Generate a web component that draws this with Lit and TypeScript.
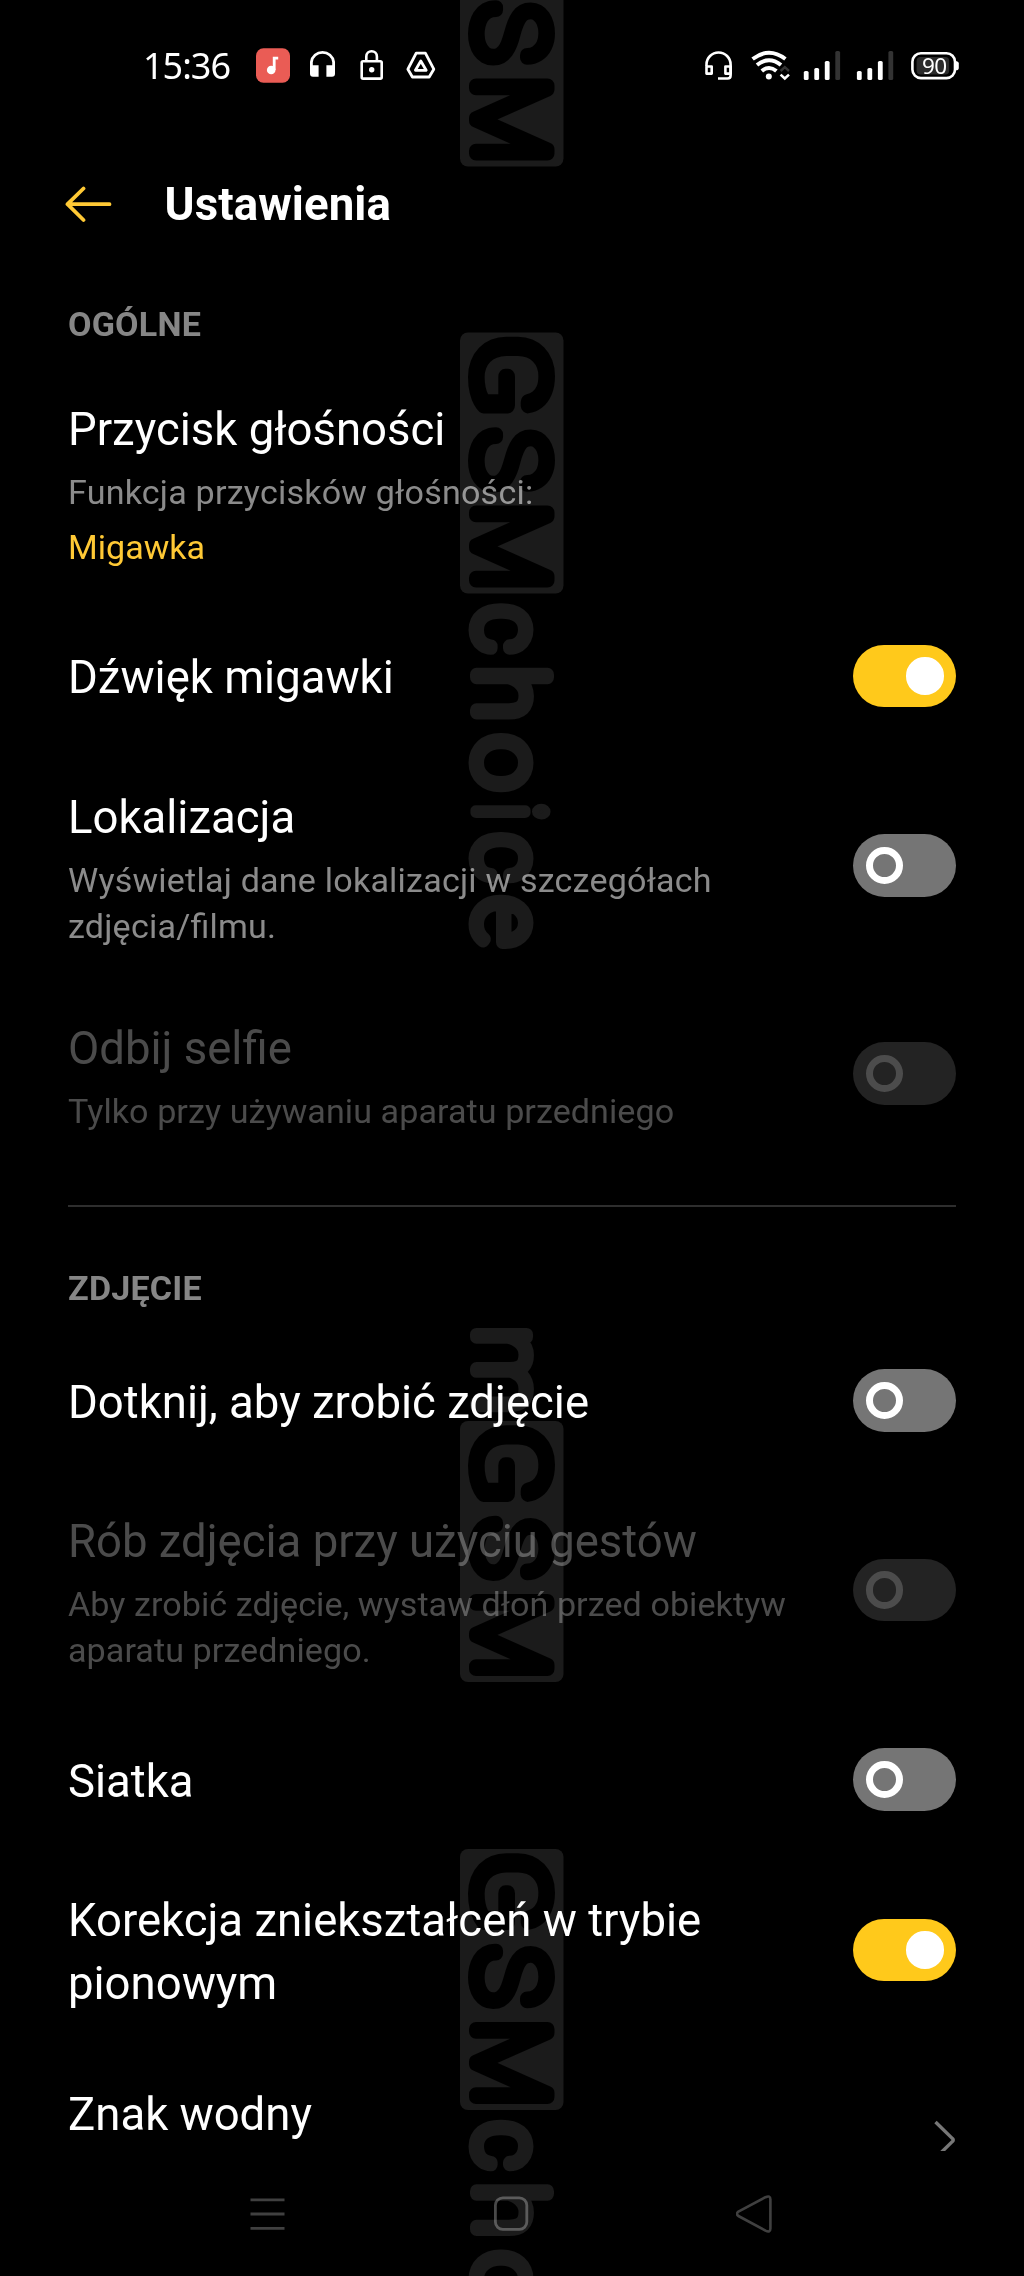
import { LitElement, html, css, svg, nothing } from "lit";
import { customElement, property } from "lit/decorators.js";

type Control = "on" | "off" | "chevron" | "none";

interface Row {
  title: string;
  sub?: string;
  value?: string;
  control: Control;
  disabled?: boolean;
  /** Extra classes that tune the vertical rhythm of the row. */
  spacing?: string;
}

const GENERAL: Row[] = [
  { title: "Przycisk głośności", sub: "Funkcja przycisków głośności:", value: "Migawka", control: "none" },
  { title: "Dźwięk migawki", control: "on", spacing: "after-value" },
  { title: "Lokalizacja", sub: "Wyświetlaj dane lokalizacji w szczegółach zdjęcia/filmu.", control: "off" },
  { title: "Odbij selfie", sub: "Tylko przy używaniu aparatu przedniego", control: "off", disabled: true, spacing: "tight" },
];

const PHOTO: Row[] = [
  { title: "Dotknij, aby zrobić zdjęcie", control: "off" },
  { title: "Rób zdjęcia przy użyciu gestów", sub: "Aby zrobić zdjęcie, wystaw dłoń przed obiektyw aparatu przedniego.", control: "off", disabled: true },
  { title: "Siatka", control: "off" },
  { title: "Korekcja zniekształceń w trybie pionowym", control: "on" },
  { title: "Znak wodny", control: "chevron", spacing: "tight" },
];

@customElement("toggle-switch")
class ToggleSwitch extends LitElement {
  @property({ type: Boolean, reflect: true }) on = false;
  @property({ type: Boolean, reflect: true }) disabled = false;

  static styles = css`
    :host {
      display: flex;
      align-items: center;
      box-sizing: border-box;
      flex: none;
      width: 103px;
      height: 62.6px;
      padding: 0 12.5px;
      border-radius: 32px;
      background: #757575;
    }
    :host([on]) {
      justify-content: flex-end;
      background: #ffc91b;
    }
    :host([disabled]) {
      background: #232323;
    }
    .knob {
      box-sizing: border-box;
      width: 37.5px;
      height: 37.5px;
      border-radius: 50%;
      border: 7.7px solid #fff;
    }
    :host([on]) .knob {
      background: #fff;
    }
    :host([disabled]) .knob {
      border-color: #4c4c4c;
    }
  `;

  render() {
    return html`<div class="knob"></div>`;
  }
}

@customElement("setting-row")
class SettingRow extends LitElement {
  @property({ attribute: false }) row!: Row;

  static styles = css`
    :host {
      display: flex;
      align-items: center;
      justify-content: space-between;
      padding-top: 76.9px;
    }
    :host(.first) {
      padding-top: 0;
    }
    :host(.after-value) {
      padding-top: 77.4px;
    }
    :host(.tight) {
      padding-top: 68.4px;
    }
    .text {
      width: 730px;
      color: #fff;
    }
    .title {
      font-size: 45.5px;
      line-height: 62.6px;
    }
    .sub {
      margin-top: 7.4px;
      font-size: 34.1px;
      line-height: 46.3px;
      letter-spacing: 0.2px;
      font-feature-settings: "liga" 1;
      color: #8b8b8b;
    }
    .value {
      margin-top: 8.4px;
      font-size: 34.1px;
      line-height: 46.3px;
      color: #ffc935;
    }
    .disabled .title,
    .disabled .sub {
      color: #4b4b4b;
    }
    .disabled .sub {
      letter-spacing: 0.07px;
    }
    .link {
      min-height: 112px;
    }
    toggle-switch {
      margin-top: -5px;
    }
    .chevron {
      flex: none;
      width: 24px;
      height: 40px;
    }
  `;

  private control() {
    const { control, disabled } = this.row;
    if (control === "none") return nothing;
    if (control === "chevron") {
      return html`<svg class="chevron" viewBox="0 0 24 40" fill="none" stroke="#777" stroke-width="3.4" stroke-linejoin="round">
        <path d="M3.5 2 L20.5 18.6 Q22 20 20.5 21.4 L3.5 38" />
      </svg>`;
    }
    return html`<toggle-switch ?on=${control === "on"} ?disabled=${!!disabled}></toggle-switch>`;
  }

  render() {
    const { title, sub, value, disabled, control } = this.row;
    return html`
      <div class="text ${disabled ? "disabled" : ""} ${control === "chevron" ? "link" : ""}">
        <div class="title">${title}</div>
        ${sub ? html`<div class="sub">${sub}</div>` : nothing}
        ${value ? html`<div class="value">${value}</div>` : nothing}
      </div>
      ${this.control()}
    `;
  }
}

@customElement("status-bar")
class StatusBar extends LitElement {
  static styles = css`
    :host {
      display: flex;
      box-sizing: border-box;
      height: 130px;
      padding: 48px 62px 0 143px;
      color: #fff;
    }
    svg {
      display: block;
      height: 35px;
      flex: none;
    }
    .time {
      width: 113px;
      font-family: "Noto Sans", sans-serif;
      font-size: 36px;
      line-height: 35px;
      letter-spacing: -1px;
    }
    .spacer {
      flex: 1;
    }
    .level {
      font-family: "Noto Sans", sans-serif;
      font-size: 22.5px;
      letter-spacing: -0.6px;
    }
  `;

  private bars(x: number) {
    const heights = [9, 12, 19, 29];
    return heights.map(
      (h, i) => svg`<rect x=${x + i * 10.5} y=${80 - h} width="4.8" height=${h} rx="1.6" fill=${i === 3 ? "#333" : "#fff"} />`
    );
  }

  render() {
    return html`
      <div class="time">15:36</div>
      <svg width="54" viewBox="256 48 54 35">
        <rect x="256" y="48.3" width="34" height="34.4" rx="7.5" fill="#ea5c55" />
        <circle cx="271.2" cy="70" r="4.3" fill="#fff" />
        <path d="M274.2 70 V58.2 H278.2" fill="none" stroke="#fff" stroke-width="2.8" />
      </svg>
      <svg width="50" viewBox="310 48 50 35">
        <path d="M311.4 72 V62 A11.2 11.2 0 0 1 333.6 62 V72" fill="none" stroke="#fff" stroke-width="2.8" />
        <path d="M310 65.3 H318.6 V76.7 H313 Q310 76.7 310 73.7 Z M335 65.3 H326.4 V76.7 H332 Q335 76.7 335 73.7 Z" fill="#fff" />
      </svg>
      <svg width="46" viewBox="360 48 46 35">
        <rect x="361.7" y="61.2" width="20" height="17.4" rx="1.4" fill="none" stroke="#fff" stroke-width="2.6" />
        <path d="M366.3 61 V56.5 A5.3 5.3 0 0 1 376.9 56.5 V61" fill="none" stroke="#fff" stroke-width="2.6" />
        <circle cx="371.7" cy="69.8" r="2.7" fill="#fff" />
      </svg>
      <svg width="34" viewBox="406 48 34 35">
        <g fill="none" stroke="#fff" stroke-width="2.8" stroke-linejoin="round">
          <path d="M416.2 53.2 H425.4 L433.8 69.2 L429.2 77 H412.4 L407.9 69.2 Z" />
          <path d="M420.8 61 L426.2 70.3 H415.4 Z" />
        </g>
      </svg>
      <div class="spacer"></div>
      <svg width="46" viewBox="705 48 46 35">
        <g fill="none" stroke="#fff" stroke-width="2.6" stroke-linejoin="round">
          <path d="M706.5 66 V64.5 A12 12 0 0 1 730.6 64.5 V75.5 Q730.6 78.5 727.6 78.5 H718" />
          <path d="M706.5 66.5 H711.7 V73.6 H706.5 Z M730.6 66.5 H725.4 V73.6 H730.6 Z" />
        </g>
      </svg>
      <svg width="52" viewBox="751 48 52 35">
        <g fill="none" stroke="#fff" stroke-width="4">
          <path d="M752.6 59 Q769 46.5 785.4 59" />
          <path d="M757 65 Q769 55.5 781 65" />
          <path d="M761.8 71 Q769 65 776.4 71" />
        </g>
        <circle cx="768.8" cy="76.6" r="3" fill="#fff" />
        <path d="M780.6 71 L784.8 67.2 L789 71" fill="none" stroke="#333" stroke-width="2.4" />
        <path d="M780.6 74.6 L784.8 78.4 L789 74.6" fill="none" stroke="#fff" stroke-width="2.6" />
      </svg>
      <svg width="107" viewBox="803 48 107 35">${this.bars(803.8)}${this.bars(856.9)}</svg>
      <svg width="52" viewBox="910 48 52 35">
        <rect x="912.4" y="53.3" width="42.6" height="24.8" rx="8.5" fill="none" stroke="#fff" stroke-width="2.6" />
        <path d="M955 61 Q958.8 61 958.8 63.5 V68 Q958.8 70.5 955 70.5 Z" fill="#fff" />
        <rect x="916.6" y="57" width="32.6" height="17.6" rx="4" fill="#2b2b2b" />
        <text class="level" x="922" y="73.8" fill="#fff">90</text>
      </svg>
    `;
  }
}

/** Letters of the vertical mark: glyph, start and end of its ink along the strip. */
type Letter = [string, number, number];
const BOXED: Letter[] = [
  ["G", 4, 81.7],
  ["S", 94, 160.5],
  ["M", 172, 255.3],
];
const OUTER: Letter[] = [
  ["c", 270, 323],
  ["h", 334.7, 388],
  ["o", 400, 460.6],
  ["i", 470.6, 487.6],
  ["c", 498.8, 551.5],
  ["e", 561.8, 616.5],
];
const LEAD: Letter[] = [["m", -94, -8.7]];

@customElement("side-mark")
class SideMark extends LitElement {
  static styles = css`
    :host {
      position: absolute;
      inset: 0;
      overflow: hidden;
      pointer-events: none;
      mix-blend-mode: screen;
    }
    svg {
      display: block;
    }
    text {
      font: 100 101px Roboto, sans-serif;
      stroke-width: 14px;
      stroke-linejoin: round;
      stroke-linecap: round;
    }
    .dotted {
      font: 100 101px "Noto Sans CJK SC", sans-serif;
      stroke-width: 12px;
    }
    .cut {
      fill: #000;
      stroke: #000;
    }
    .solid {
      fill: #1b1b1b;
      stroke: #1b1b1b;
    }
  `;

  private pen = document.createElement("canvas").getContext("2d")!;

  /** Stretches a glyph so that its stroked outline spans exactly [from, to]. */
  private fit(ch: string, from: number, to: number, scaleY: number) {
    const dotted = ch === "i";
    const stroke = dotted ? 12 : 14;
    this.pen.font = dotted ? `100 101px "Noto Sans CJK SC", sans-serif` : `100 101px Roboto, sans-serif`;
    const m = this.pen.measureText(ch);
    const left = -m.actualBoundingBoxLeft - stroke / 2;
    const right = m.actualBoundingBoxRight + stroke / 2;
    const k = (to - from) / (right - left);
    return `translate(${from - left * k} -16) scale(${k} ${scaleY})`;
  }

  private letters(list: Letter[], cls: string, scaleY: number) {
    return list.map(
      ([ch, from, to]) => svg`<text class="${cls} ${ch === "i" ? "dotted" : ""}" transform=${this.fit(ch, from, to, scaleY)}>${ch}</text>`
    );
  }

  private mark(y: number, tail: boolean, lead: boolean) {
    return svg`<g transform="translate(460 ${y}) rotate(90)">
      <rect x="0" y="-103.5" width="261" height="103.5" rx="8" fill="#1b1b1b" />
      ${this.letters(BOXED, "cut", 1)}
      ${tail ? this.letters(OUTER, "solid", 0.93) : nothing}
      ${lead ? this.letters(LEAD, "solid", 0.93) : nothing}
    </g>`;
  }

  render() {
    return html`<svg width="1024" height="2276" viewBox="0 0 1024 2276">
      ${this.mark(-94.5, false, false)} ${this.mark(332.5, true, false)} ${this.mark(1421, false, true)} ${this.mark(1849, true, false)}
    </svg>`;
  }
}

@customElement("app-root")
class AppRoot extends LitElement {
  static styles = css`
    :host {
      display: flex;
      flex-direction: column;
      position: relative;
      isolation: isolate;
      width: 1024px;
      height: 2276px;
      overflow: hidden;
      background: #000;
      font-family: Roboto, sans-serif;
    }
    .app-bar {
      display: flex;
      align-items: center;
      height: 148px;
      flex: none;
      padding-left: 65px;
    }
    .back {
      width: 47px;
      height: 37px;
    }
    .heading {
      margin: 2px 0 0 52.5px;
      font-size: 45.6px;
      line-height: 56px;
      font-weight: 700;
      letter-spacing: 0.1px;
      color: #fff;
    }
    .list {
      height: 1873px;
      flex: none;
      overflow: hidden;
      padding: 0 68px;
    }
    .section {
      padding-top: 22.5px;
      padding-bottom: 52.4px;
      font-size: 34.1px;
      line-height: 46px;
      font-weight: 700;
      letter-spacing: 0.2px;
      color: #868686;
    }
    .divider {
      height: 2px;
      margin-top: 70.6px;
      background: #2e2e2e;
    }
    .divider + .section {
      padding-top: 58.6px;
      padding-bottom: 60.4px;
    }
    .nav {
      display: flex;
      flex: 1;
      align-items: center;
      justify-content: space-between;
      padding: 0 251px 0 250px;
    }
  `;

  private rows(list: Row[]) {
    return list.map((row, i) => html`<setting-row class="${i === 0 ? "first" : ""} ${row.spacing ?? ""}" .row=${row}></setting-row>`);
  }

  render() {
    return html`
      <status-bar></status-bar>
      <div class="app-bar">
        <svg class="back" viewBox="0 0 47 37" fill="none" stroke="#ffc935" stroke-width="3.8" stroke-linecap="round" stroke-linejoin="round">
          <path d="M18.5 2.5 L2.5 18.2 L18.5 34 M2.5 18.2 H44.5" />
        </svg>
        <h1 class="heading">Ustawienia</h1>
      </div>
      <div class="list">
        <div class="section">OGÓLNE</div>
        ${this.rows(GENERAL)}
        <div class="divider"></div>
        <div class="section">ZDJĘCIE</div>
        ${this.rows(PHOTO)}
      </div>
      <div class="nav">
        <svg width="35" height="38" viewBox="0 0 35 38" stroke="#404040" stroke-width="2.8">
          <path d="M0.5 4.8 H34.5 M0.5 19 H34.5 M0.5 33.4 H34.5" />
        </svg>
        <svg width="36" height="38" viewBox="0 0 36 38" fill="none" stroke="#484848" stroke-width="2.8">
          <rect x="2.4" y="2.8" width="31.4" height="31.6" rx="7.5" />
        </svg>
        <svg width="37" height="40" viewBox="0 0 37 40" fill="none" stroke="#404040" stroke-width="2.6" stroke-linejoin="round">
          <path d="M2.4 17.6 L29.5 3.2 Q34.4 1 34.4 5.5 V34.5 Q34.4 39 29.5 36.6 L2.4 22 Q-0.4 19.8 2.4 17.6 Z" />
        </svg>
      </div>
      <side-mark></side-mark>
    `;
  }
}
